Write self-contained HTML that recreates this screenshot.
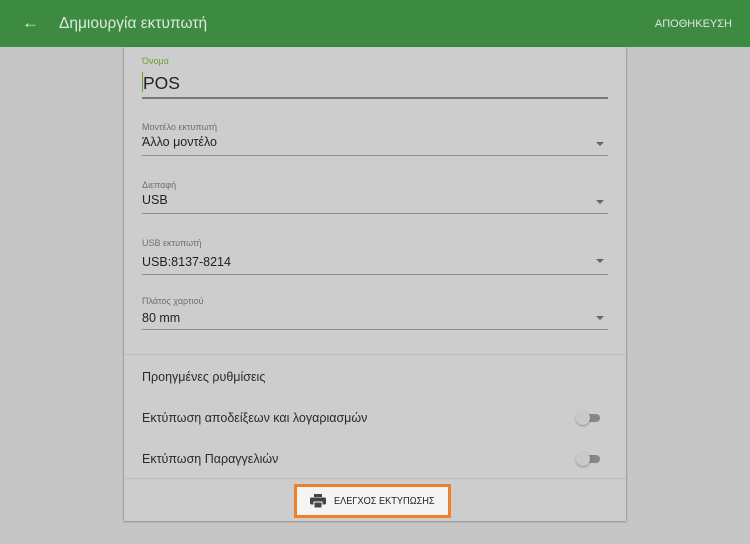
<!DOCTYPE html>
<html><head><meta charset="utf-8"><style>
*{margin:0;padding:0;box-sizing:border-box}
body{width:750px;height:544px;background:#c6c6c6;font-family:"Liberation Sans","DejaVu Sans",sans-serif;position:relative;overflow:hidden}
.hdr{position:absolute;left:0;top:0;width:750px;height:47px;background:#3d8b41;color:#dfe8df}
.hdr .t{position:absolute;left:59px;top:15px;font-size:15.5px}
.hdr .b{position:absolute;left:22px;top:13px;font-size:17px}
.hdr .s{position:absolute;right:18px;top:18px;font-size:11px}
.card{position:absolute;left:124px;top:47px;width:502px;height:474px;background:#cdcdcd;box-shadow:0 1px 2px rgba(0,0,0,.25),-1px 0 1px rgba(0,0,0,.12),1px 0 1px rgba(0,0,0,.12)}
.a{position:absolute}
.lab{font-size:9px;color:#6e6e6e}
.val{font-size:12.5px;color:#222}
.line{height:1px;background:#8e8e8e;left:18px;width:466px}
.arr{width:0;height:0;border-left:4px solid transparent;border-right:4px solid transparent;border-top:4px solid #666;left:472px}
.sep{height:1px;background:#bdbdbd;left:0;width:502px}
.row{font-size:12.5px;color:#2a2a2a;left:18px}
.tg{left:452px;width:24px;height:14px}
.tg .tr{position:absolute;left:4px;top:3px;width:20px;height:8px;border-radius:4px;background:#878787}
.tg .k{position:absolute;left:0;top:0;width:14px;height:14px;border-radius:50%;background:#c9c9c9;box-shadow:0 1px 2px rgba(0,0,0,.3)}
.btn{position:absolute;left:294px;top:484px;width:157px;height:34px;border:3px solid #ee7f2d;background:#f4f4f4;font-size:10px;color:#222;white-space:nowrap}
</style></head><body>
<div class="hdr"><div class="b">&#8592;</div><div class="t">Δημιουργία εκτυπωτή</div><div class="s">ΑΠΟΘΗΚΕΥΣΗ</div></div>
<div class="card">
<div class="a lab" style="left:18px;top:9px;color:#6aa33a">Όνομα</div>
<div class="a" style="left:18px;top:25px;width:1px;height:20px;background:#6aa33a"></div>
<div class="a" style="left:19px;top:26px;font-size:17.5px;color:#222">POS</div>
<div class="a line" style="top:50px;height:2px;background:#7a7a7a"></div>

<div class="a lab" style="left:18px;top:75px">Μοντέλο εκτυπωτή</div>
<div class="a val" style="left:18px;top:88px">Άλλο μοντέλο</div>
<div class="a arr" style="top:95px"></div>
<div class="a line" style="top:108px"></div>

<div class="a lab" style="left:18px;top:133px">Διεπαφή</div>
<div class="a val" style="left:18px;top:146px">USB</div>
<div class="a arr" style="top:153px"></div>
<div class="a line" style="top:166px"></div>

<div class="a lab" style="left:18px;top:191px">USB εκτυπωτή</div>
<div class="a val" style="left:18px;top:208px">USB:8137-8214</div>
<div class="a arr" style="top:212px"></div>
<div class="a line" style="top:227px"></div>

<div class="a lab" style="left:18px;top:249px">Πλάτος χαρτιού</div>
<div class="a val" style="left:18px;top:264px">80 mm</div>
<div class="a arr" style="top:269px"></div>
<div class="a line" style="top:282px"></div>

<div class="a sep" style="top:307px"></div>
<div class="a row" style="top:323px">Προηγμένες ρυθμίσεις</div>
<div class="a row" style="top:364px">Εκτύπωση αποδείξεων και λογαριασμών</div>
<div class="a tg" style="top:364px"><div class="tr"></div><div class="k"></div></div>
<div class="a row" style="top:405px">Εκτύπωση Παραγγελιών</div>
<div class="a tg" style="top:405px"><div class="tr"></div><div class="k"></div></div>
<div class="a sep" style="top:431px"></div>
</div>
<div class="btn">
<svg style="position:absolute;left:13px;top:7px" width="16" height="14" viewBox="0 0 16 14"><rect x="4" y="0" width="8" height="3" fill="#444"/><rect x="0" y="3.5" width="16" height="7" rx="1.5" fill="#444"/><rect x="4" y="8" width="8" height="6" fill="#444" stroke="#f4f4f4" stroke-width="1"/></svg>
<div style="position:absolute;left:37px;top:9px;transform:scaleX(0.92);transform-origin:left">ΕΛΕΓΧΟΣ ΕΚΤΥΠΩΣΗΣ</div>
</div>
</body></html>
